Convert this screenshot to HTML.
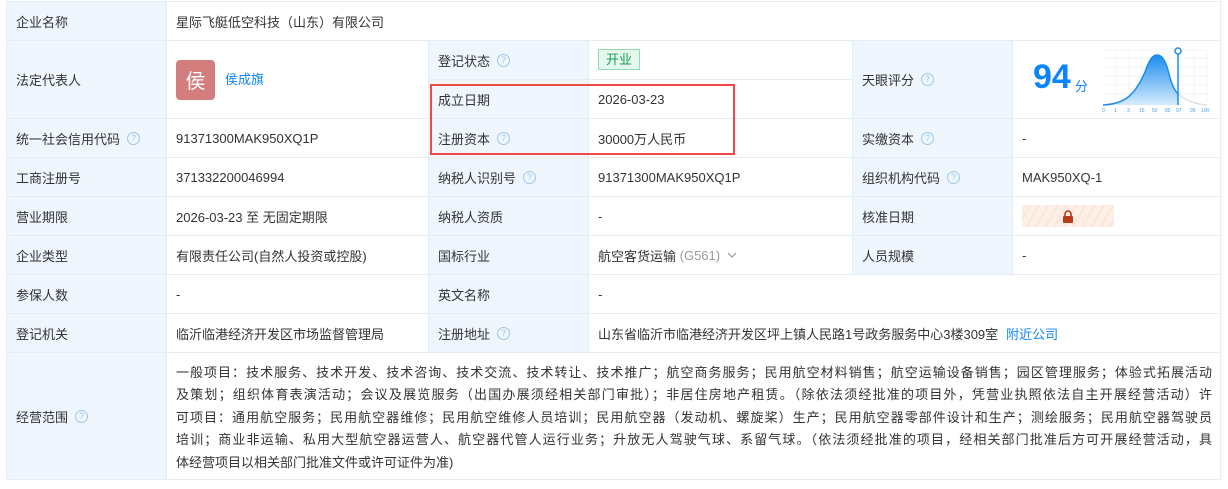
<!DOCTYPE html>
<html><head><meta charset="utf-8">
<style>
*{margin:0;padding:0;box-sizing:border-box}
body{width:1228px;height:489px;background:#fff;font-family:"Liberation Sans","Noto Sans CJK SC",sans-serif;font-size:13px;color:#333;position:relative;overflow:hidden}
.c{position:absolute;border-right:1px solid #e4edf5;border-bottom:1px solid #e4edf5;display:flex;align-items:center;padding-left:9px;white-space:nowrap}
.l{background:#eff6fd}
.q{display:inline-block;width:13px;height:13px;border:1px solid #9cc7e8;border-radius:50%;color:#9cc7e8;font-size:9px;line-height:11px;text-align:center;margin-left:7px}
.blue{color:#0b84ff}
</style></head><body>
<div style="position:absolute;left:6px;top:1px;width:1215px;height:479px;border-left:1px solid #e4edf5;border-top:1px solid #e4edf5"></div>
<div class="c l" style="left:7px;top:2px;width:160px;height:39px">企业名称</div>
<div class="c" style="left:167px;top:2px;width:1054px;height:39px">星际飞艇低空科技（山东）有限公司</div>
<div class="c l" style="left:7px;top:41px;width:160px;height:78px">法定代表人</div>
<div class="c" style="left:167px;top:41px;width:262px;height:78px"><span style="width:39px;height:40px;background:#d47d7d;border-radius:4px;color:#fff;font-size:20px;display:flex;align-items:center;justify-content:center">侯</span><span class="blue" style="margin-left:10px;margin-top:-2px">侯成旗</span></div>
<div class="c l" style="left:429px;top:41px;width:160px;height:39px">登记状态<span class="q">?</span></div>
<div class="c" style="left:589px;top:41px;width:264px;height:39px"><span style="background:#e5f8ee;border:1px solid #8fdcb2;color:#1a9b50;padding:0 7px;height:21px;line-height:19px;margin-top:-2px">开业</span></div>
<div class="c l" style="left:429px;top:80px;width:160px;height:39px">成立日期</div>
<div class="c" style="left:589px;top:80px;width:264px;height:39px">2026-03-23</div>
<div class="c l" style="left:853px;top:41px;width:160px;height:78px">天眼评分<span class="q">?</span></div>
<div class="c" style="left:1013px;top:41px;width:208px;height:78px">
<span style="color:#0b84ff;font-size:34px;font-weight:bold;margin-left:11px;margin-top:-4px">94</span><span style="color:#0b84ff;font-size:13px;margin-left:4px;margin-top:12px">分</span>
<svg style="position:absolute;left:89px;top:5px" width="112" height="70" viewBox="1102 46 112 70">
<g stroke="#f1f4f9" stroke-width="1">
<line x1="1103" y1="58" x2="1207" y2="58"/><line x1="1103" y1="67" x2="1207" y2="67"/><line x1="1103" y1="76" x2="1207" y2="76"/><line x1="1103" y1="85" x2="1207" y2="85"/><line x1="1103" y1="94" x2="1207" y2="94"/><line x1="1103" y1="50" x2="1207" y2="50"/>
<line x1="1116" y1="50" x2="1116" y2="105"/><line x1="1129" y1="50" x2="1129" y2="105"/><line x1="1142" y1="50" x2="1142" y2="105"/><line x1="1155" y1="50" x2="1155" y2="105"/><line x1="1168" y1="50" x2="1168" y2="105"/><line x1="1181" y1="50" x2="1181" y2="105"/><line x1="1194" y1="50" x2="1194" y2="105"/><line x1="1207" y1="50" x2="1207" y2="105"/>
</g>
<defs><linearGradient id="g" x1="0" y1="0" x2="0" y2="1"><stop offset="0" stop-color="#1a8cf0"/><stop offset="1" stop-color="#d6ebfc"/></linearGradient></defs>
<path d="M1103 105 C1125 104 1135 95 1145 72 C1150 58 1153 55 1157 55 C1162 55 1166 60 1170 78 C1173 88 1176 92 1178 94 L1178 105 Z" fill="url(#g)"/>
<path d="M1103 105 C1125 104 1135 95 1145 72 C1150 58 1153 55 1157 55 C1162 55 1166 60 1170 78 C1173 88 1176 92 1178 94" fill="none" stroke="#1a8cf0" stroke-width="1.5"/>
<path d="M1178 94 C1185 100 1195 104 1207 105" fill="none" stroke="#ddd" stroke-width="1.2"/>
<line x1="1178" y1="52" x2="1178" y2="105" stroke="#1a8cf0" stroke-width="1.5"/>
<circle cx="1178" cy="51" r="3" fill="#fff" stroke="#1a8cf0" stroke-width="1.5"/>
<g font-size="5" fill="#4a9fe8" font-family="Liberation Sans"><text x="1102" y="112">0</text><text x="1114" y="112">1</text><text x="1127" y="112">3</text><text x="1139" y="112">15</text><text x="1152" y="112">50</text><text x="1165" y="112">85</text><text x="1176" y="112">97</text><text x="1190" y="112">99</text><text x="1201" y="112">100</text></g>
</svg></div>
<div class="c l" style="left:7px;top:119px;width:160px;height:39px">统一社会信用代码<span class="q">?</span></div>
<div class="c" style="left:167px;top:119px;width:262px;height:39px">91371300MAK950XQ1P</div>
<div class="c l" style="left:429px;top:119px;width:160px;height:39px">注册资本<span class="q">?</span></div>
<div class="c" style="left:589px;top:119px;width:264px;height:39px">30000万人民币</div>
<div class="c l" style="left:853px;top:119px;width:160px;height:39px">实缴资本<span class="q">?</span></div>
<div class="c" style="left:1013px;top:119px;width:208px;height:39px">-</div>
<div style="position:absolute;left:430px;top:84px;width:305px;height:71px;border:2px solid #f04848"></div>
<div class="c l" style="left:7px;top:158px;width:160px;height:39px">工商注册号</div>
<div class="c" style="left:167px;top:158px;width:262px;height:39px">371332200046994</div>
<div class="c l" style="left:429px;top:158px;width:160px;height:39px">纳税人识别号<span class="q">?</span></div>
<div class="c" style="left:589px;top:158px;width:264px;height:39px">91371300MAK950XQ1P</div>
<div class="c l" style="left:853px;top:158px;width:160px;height:39px">组织机构代码<span class="q">?</span></div>
<div class="c" style="left:1013px;top:158px;width:208px;height:39px">MAK950XQ-1</div>
<div class="c l" style="left:7px;top:197px;width:160px;height:39px">营业期限</div>
<div class="c" style="left:167px;top:197px;width:262px;height:39px">2026-03-23 至 无固定期限</div>
<div class="c l" style="left:429px;top:197px;width:160px;height:39px">纳税人资质</div>
<div class="c" style="left:589px;top:197px;width:264px;height:39px">-</div>
<div class="c l" style="left:853px;top:197px;width:160px;height:39px">核准日期</div>
<div class="c" style="left:1013px;top:197px;width:208px;height:39px"><span style="width:92px;height:22px;border-radius:2px;background:repeating-linear-gradient(120deg,#fcefe5 0 6px,#f9e6d9 6px 8px);display:flex;align-items:center;justify-content:center"><svg width="12" height="13" viewBox="0 0 12 13"><path d="M3 6V4a3 3 0 0 1 6 0v2" fill="none" stroke="#b83a1a" stroke-width="1.6"/><rect x="1" y="6" width="10" height="7" rx="1" fill="#b83a1a"/></svg></span></div>
<div class="c l" style="left:7px;top:236px;width:160px;height:39px">企业类型</div>
<div class="c" style="left:167px;top:236px;width:262px;height:39px">有限责任公司(自然人投资或控股)</div>
<div class="c l" style="left:429px;top:236px;width:160px;height:39px">国标行业</div>
<div class="c" style="left:589px;top:236px;width:264px;height:39px">航空客货运输<span style="color:#999">&nbsp;(G561)</span><svg style="margin-left:7px" width="10" height="6" viewBox="0 0 10 6"><path d="M1 1l4 4 4-4" fill="none" stroke="#999" stroke-width="1.2"/></svg></div>
<div class="c l" style="left:853px;top:236px;width:160px;height:39px">人员规模</div>
<div class="c" style="left:1013px;top:236px;width:208px;height:39px">-</div>
<div class="c l" style="left:7px;top:275px;width:160px;height:39px">参保人数</div>
<div class="c" style="left:167px;top:275px;width:262px;height:39px">-</div>
<div class="c l" style="left:429px;top:275px;width:160px;height:39px">英文名称</div>
<div class="c" style="left:589px;top:275px;width:632px;height:39px">-</div>
<div class="c l" style="left:7px;top:314px;width:160px;height:39px">登记机关</div>
<div class="c" style="left:167px;top:314px;width:262px;height:39px">临沂临港经济开发区市场监督管理局</div>
<div class="c l" style="left:429px;top:314px;width:160px;height:39px">注册地址<span class="q">?</span></div>
<div class="c" style="left:589px;top:314px;width:632px;height:39px">山东省临沂市临港经济开发区坪上镇人民路1号政务服务中心3楼309室<span class="blue" style="margin-left:8px">附近公司</span></div>
<div class="c l" style="left:7px;top:353px;width:160px;height:127px">经营范围<span class="q">?</span></div>
<div class="c" style="left:167px;top:353px;width:1054px;height:127px;white-space:normal;line-height:22.4px;padding-right:8px">
<div style="width:1038px;text-align:justify;text-align-last:justify;margin-top:4px">
<div>一般项目：技术服务、技术开发、技术咨询、技术交流、技术转让、技术推广；航空商务服务；民用航空材料销售；航空运输设备销售；园区管理服务；体验式拓展活动</div>
<div>及策划；组织体育表演活动；会议及展览服务（出国办展须经相关部门审批）；非居住房地产租赁。（除依法须经批准的项目外，凭营业执照依法自主开展经营活动）许</div>
<div>可项目：通用航空服务；民用航空器维修；民用航空维修人员培训；民用航空器（发动机、螺旋桨）生产；民用航空器零部件设计和生产；测绘服务；民用航空器驾驶员</div>
<div>培训；商业非运输、私用大型航空器运营人、航空器代管人运行业务；升放无人驾驶气球、系留气球。（依法须经批准的项目，经相关部门批准后方可开展经营活动，具</div>
<div style="text-align-last:left">体经营项目以相关部门批准文件或许可证件为准)</div>
</div></div>
</body></html>
